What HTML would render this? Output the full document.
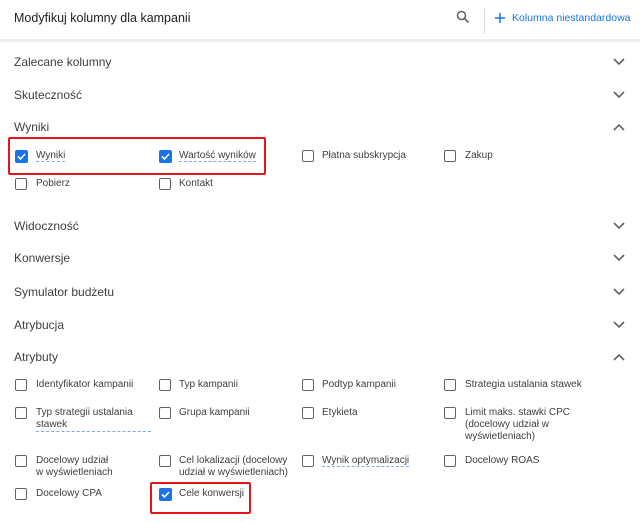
<html><head><style>
body{margin:0;width:640px;height:523px;background:#fff;font-family:"Liberation Sans",sans-serif;position:relative;overflow:hidden;color:#3c4043}
.a{position:absolute;white-space:nowrap}
.h{font-size:12px;color:#3c4043}
.t{font-size:10px;line-height:12px;color:#3c4043}
.cb{position:absolute;width:10px;height:10px;border:1.6px solid #5f6368;border-radius:2px}
.ck{position:absolute;width:13px;height:13px;background:#1a73e8;border-radius:2px}
.d{border-bottom:1px dashed #7baaf7}
.chev{position:absolute;left:613px;width:12px;height:8px}
.red{position:absolute;border:2px solid #e8141c;border-radius:2px}
</style></head><body>
<div class="a" style="left:14px;top:11px;font-size:12.5px;color:#202124">Modyfikuj kolumny dla kampanii</div>
<svg class="a" style="left:456px;top:10px" width="14" height="14" viewBox="0 0 14 14"><circle cx="5.5" cy="5.5" r="4" fill="none" stroke="#5f6368" stroke-width="1.5"/><path d="M8.5 8.5L12.5 12.5" stroke="#5f6368" stroke-width="1.6"/></svg>
<div class="a" style="left:484px;top:8px;width:1px;height:26px;background:#dadce0"></div>
<svg class="a" style="left:495px;top:13px" width="10" height="10"><path d="M5 0V10M0 5H10" stroke="#1a73e8" stroke-width="1.5"/></svg>
<div class="a" style="left:512px;top:12px;font-size:10.5px;color:#1a73e8">Kolumna niestandardowa</div>
<div class="a" style="left:0;top:39px;width:640px;height:3px;background:#eceeef"></div>

<div class="a h" style="left:14px;top:55px">Zalecane kolumny</div>
<div class="a h" style="left:14px;top:88px">Skuteczność</div>
<div class="a h" style="left:14px;top:120px">Wyniki</div>
<div class="a h" style="left:14px;top:219px">Widoczność</div>
<div class="a h" style="left:14px;top:251px">Konwersje</div>
<div class="a h" style="left:14px;top:285px">Symulator budżetu</div>
<div class="a h" style="left:14px;top:318px">Atrybucja</div>
<div class="a h" style="left:14px;top:350px">Atrybuty</div>

<svg class="chev" style="top:58px" viewBox="0 0 12 8"><path d="M1 1L6 6L11 1" fill="none" stroke="#5f6368" stroke-width="1.6"/></svg>
<svg class="chev" style="top:91px" viewBox="0 0 12 8"><path d="M1 1L6 6L11 1" fill="none" stroke="#5f6368" stroke-width="1.6"/></svg>
<svg class="chev" style="top:123px" viewBox="0 0 12 8"><path d="M1 7L6 2L11 7" fill="none" stroke="#5f6368" stroke-width="1.6"/></svg>
<svg class="chev" style="top:222px" viewBox="0 0 12 8"><path d="M1 1L6 6L11 1" fill="none" stroke="#5f6368" stroke-width="1.6"/></svg>
<svg class="chev" style="top:254px" viewBox="0 0 12 8"><path d="M1 1L6 6L11 1" fill="none" stroke="#5f6368" stroke-width="1.6"/></svg>
<svg class="chev" style="top:288px" viewBox="0 0 12 8"><path d="M1 1L6 6L11 1" fill="none" stroke="#5f6368" stroke-width="1.6"/></svg>
<svg class="chev" style="top:321px" viewBox="0 0 12 8"><path d="M1 1L6 6L11 1" fill="none" stroke="#5f6368" stroke-width="1.6"/></svg>
<svg class="chev" style="top:353px" viewBox="0 0 12 8"><path d="M1 7L6 2L11 7" fill="none" stroke="#5f6368" stroke-width="1.6"/></svg>

<svg class="ck" style="left:15px;top:150px" viewBox="0 0 13 13"><path d="M3 6.5L5.5 9L10 4" fill="none" stroke="#fff" stroke-width="1.6"/></svg>
<div class="a t" style="left:36px;top:150px"><span class="d">Wyniki</span></div>
<svg class="ck" style="left:159px;top:150px" viewBox="0 0 13 13"><path d="M3 6.5L5.5 9L10 4" fill="none" stroke="#fff" stroke-width="1.6"/></svg>
<div class="a t" style="left:179px;top:150px"><span class="d">Wartość wyników</span></div>
<div class="cb" style="left:302px;top:150px"></div><div class="a t" style="left:322px;top:150px">Płatna subskrypcja</div>
<div class="cb" style="left:444px;top:150px"></div><div class="a t" style="left:465px;top:150px">Zakup</div>
<div class="cb" style="left:15px;top:178px"></div><div class="a t" style="left:36px;top:178px">Pobierz</div>
<div class="cb" style="left:159px;top:178px"></div><div class="a t" style="left:179px;top:178px">Kontakt</div>
<div class="red" style="left:8px;top:137px;width:254px;height:34px"></div>

<div class="cb" style="left:15px;top:379px"></div><div class="a t" style="left:36px;top:379px">Identyfikator kampanii</div>
<div class="cb" style="left:159px;top:379px"></div><div class="a t" style="left:179px;top:379px">Typ kampanii</div>
<div class="cb" style="left:302px;top:379px"></div><div class="a t" style="left:322px;top:379px">Podtyp kampanii</div>
<div class="cb" style="left:444px;top:379px"></div><div class="a t" style="left:465px;top:379px">Strategia ustalania stawek</div>

<div class="cb" style="left:15px;top:407px"></div><div class="a t" style="left:36px;top:407px">Typ strategii ustalania<br><span class="d" style="display:inline-block;width:115px">stawek</span></div>
<div class="cb" style="left:159px;top:407px"></div><div class="a t" style="left:179px;top:407px">Grupa kampanii</div>
<div class="cb" style="left:302px;top:407px"></div><div class="a t" style="left:322px;top:407px">Etykieta</div>
<div class="cb" style="left:444px;top:407px"></div><div class="a t" style="left:465px;top:407px">Limit maks. stawki CPC<br>(docelowy udział w<br>wyświetleniach)</div>

<div class="cb" style="left:15px;top:455px"></div><div class="a t" style="left:36px;top:455px">Docelowy udział<br>w wyświetleniach</div>
<div class="cb" style="left:159px;top:455px"></div><div class="a t" style="left:179px;top:455px">Cel lokalizacji (docelowy<br>udział w wyświetleniach)</div>
<div class="cb" style="left:302px;top:455px"></div><div class="a t" style="left:322px;top:455px"><span class="d">Wynik optymalizacji</span></div>
<div class="cb" style="left:444px;top:455px"></div><div class="a t" style="left:465px;top:455px">Docelowy ROAS</div>

<div class="cb" style="left:15px;top:488px"></div><div class="a t" style="left:36px;top:488px">Docelowy CPA</div>
<svg class="ck" style="left:159px;top:488px" viewBox="0 0 13 13"><path d="M3 6.5L5.5 9L10 4" fill="none" stroke="#fff" stroke-width="1.6"/></svg>
<div class="a t" style="left:179px;top:488px">Cele konwersji</div>
<div class="red" style="left:150px;top:482px;width:97px;height:28px"></div>
</body></html>
